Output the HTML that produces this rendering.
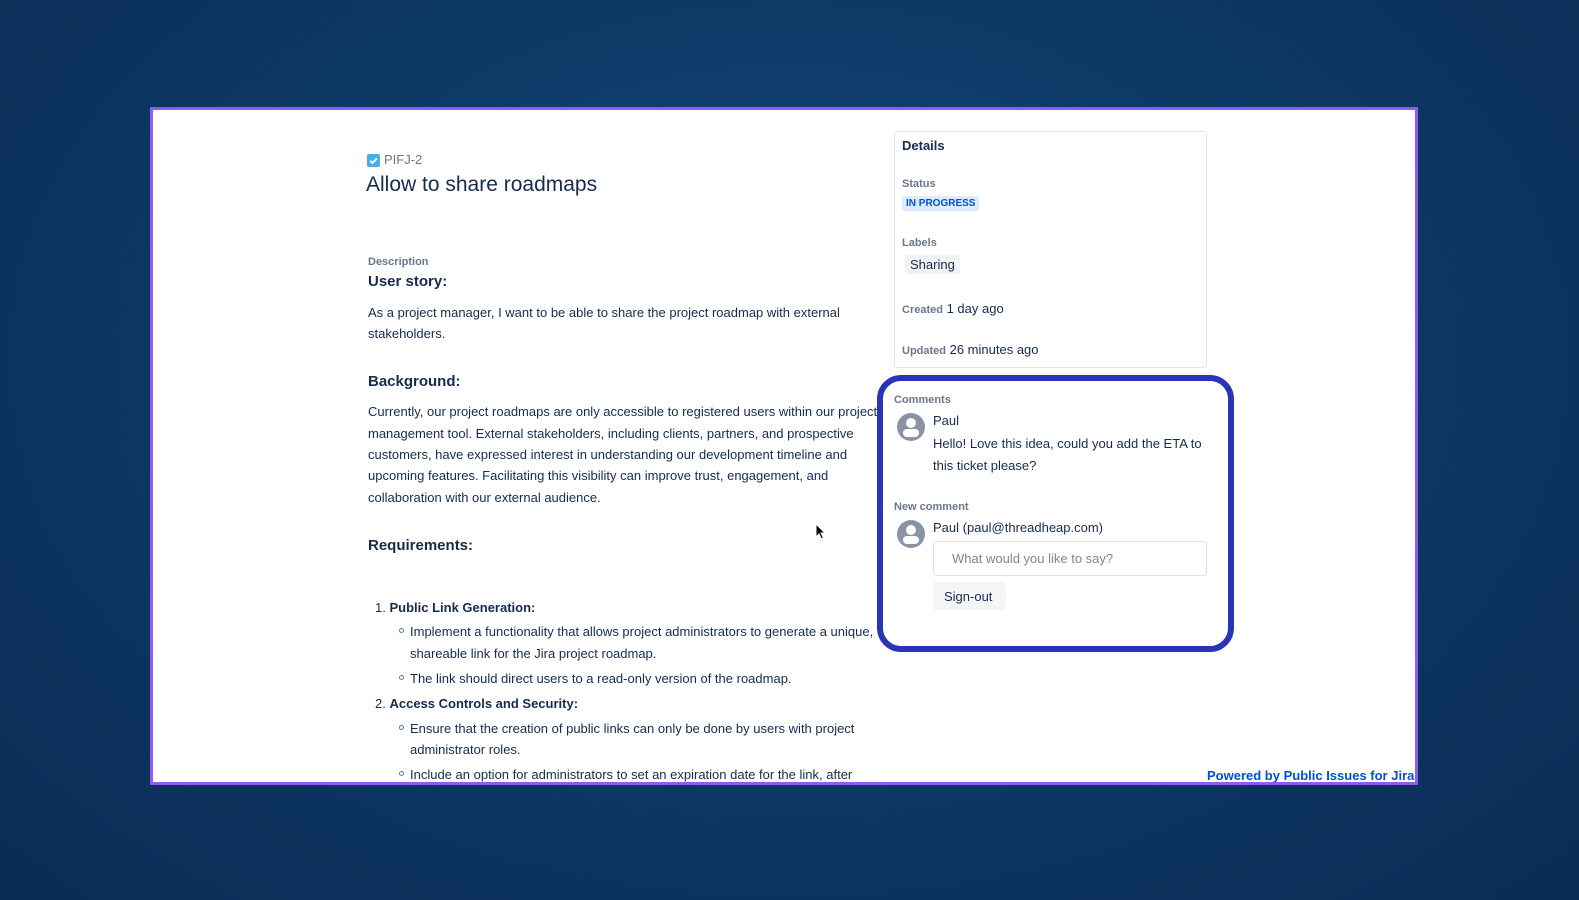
<!DOCTYPE html>
<html><head><meta charset="utf-8"><style>
*{margin:0;padding:0;box-sizing:border-box}
body{width:1579px;height:900px;overflow:hidden;background:radial-gradient(ellipse at 50% 40%,#134678 0%,#0d3764 55%,#0a2c55 100%);font-family:"Liberation Sans",sans-serif;color:#172b4d;position:relative}
.frame{position:absolute;left:150px;top:107px;width:1268px;height:678px;background:#fff;border:3px solid #8e5cf0;overflow:hidden}
.a{position:absolute;white-space:nowrap}
.t{font-size:13px}
.lbl{font-size:11px;font-weight:bold;color:#6b778c}
.h{font-size:15px;font-weight:bold}
.b{font-size:13px;font-weight:bold}
.bul{position:absolute;width:5px;height:5px;border:1px solid #6b778c;border-radius:50%}
.av{position:absolute;width:28px;height:28px;border-radius:50%;background:#8993a4;overflow:hidden}
.av:before{content:"";position:absolute;left:9px;top:5px;width:10px;height:10px;border-radius:50%;background:#fff}
.av:after{content:"";position:absolute;left:6px;top:16px;width:16px;height:8px;border-radius:4px;background:#fff}
</style></head><body>
<div class="frame">
<!-- coordinates relative to frame: subtract 153,110 -->
<div class="a" style="left:214px;top:44px;width:13px;height:13px;background:#4bade8;border-radius:2px"><svg width="13" height="13" viewBox="0 0 13 13"><path d="M3.2 6.7l2.3 2.3 4.3-4.6" stroke="#fff" stroke-width="1.8" fill="none"/></svg></div>
<div class="a" style="left:231px;top:42px;font-size:13px;color:#6b778c">PIFJ-2</div>
<div class="a" style="left:213px;top:63px;font-size:21px;color:#172b4d">Allow to share roadmaps</div>
<div class="a lbl" style="left:215px;top:146px">Description</div>
<div class="a h" style="left:215px;top:163px">User story:</div>
<div class="a t" style="left:215px;top:195px">As a project manager, I want to be able to share the project roadmap with external</div>
<div class="a t" style="left:215px;top:216px">stakeholders.</div>
<div class="a h" style="left:215px;top:263px">Background:</div>
<div class="a t" style="left:215px;top:294px">Currently, our project roadmaps are only accessible to registered users within our project</div>
<div class="a t" style="left:215px;top:316px">management tool. External stakeholders, including clients, partners, and prospective</div>
<div class="a t" style="left:215px;top:337px">customers, have expressed interest in understanding our development timeline and</div>
<div class="a t" style="left:215px;top:358px">upcoming features. Facilitating this visibility can improve trust, engagement, and</div>
<div class="a t" style="left:215px;top:380px">collaboration with our external audience.</div>
<div class="a h" style="left:215px;top:427px">Requirements:</div>
<div class="a t" style="left:222px;top:490px">1. <b>Public Link Generation:</b></div>
<div class="bul" style="left:246px;top:518px"></div>
<div class="a t" style="left:257px;top:514px">Implement a functionality that allows project administrators to generate a unique,</div>
<div class="a t" style="left:257px;top:536px">shareable link for the Jira project roadmap.</div>
<div class="bul" style="left:246px;top:565px"></div>
<div class="a t" style="left:257px;top:561px">The link should direct users to a read-only version of the roadmap.</div>
<div class="a t" style="left:222px;top:586px">2. <b>Access Controls and Security:</b></div>
<div class="bul" style="left:246px;top:615px"></div>
<div class="a t" style="left:257px;top:611px">Ensure that the creation of public links can only be done by users with project</div>
<div class="a t" style="left:257px;top:632px">administrator roles.</div>
<div class="bul" style="left:246px;top:661px"></div>
<div class="a t" style="left:257px;top:657px">Include an option for administrators to set an expiration date for the link, after</div>

<!-- details -->
<div class="a" style="left:741px;top:21px;width:313px;height:237px;border:1px solid #e4e6ea;border-radius:3px"></div>
<div class="a b" style="left:749px;top:28px">Details</div>
<div class="a lbl" style="left:749px;top:68px">Status</div>
<div class="a" style="left:749px;top:86px;background:#deebff;color:#0052cc;font-size:10px;font-weight:bold;padding:2px 4px;border-radius:3px">IN PROGRESS</div>
<div class="a lbl" style="left:749px;top:127px">Labels</div>
<div class="a t" style="left:752px;top:145px;background:#f1f2f4;padding:2px 5px;border-radius:3px">Sharing</div>
<div class="a" style="left:749px;top:191px;font-size:13px"><span class="lbl">Created</span> 1 day ago</div>
<div class="a" style="left:749px;top:232px;font-size:13px"><span class="lbl">Updated</span> 26 minutes ago</div>

<!-- comments -->
<div class="a" style="left:724px;top:265px;width:357px;height:277px;border:6px solid #2a35b5;border-radius:24px"></div>
<div class="a lbl" style="left:741px;top:284px">Comments</div>
<div class="av" style="left:744px;top:303px"></div>
<div class="a t" style="left:780px;top:303px">Paul</div>
<div class="a t" style="left:780px;top:326px">Hello! Love this idea, could you add the ETA to</div>
<div class="a t" style="left:780px;top:348px">this ticket please?</div>
<div class="a lbl" style="left:741px;top:391px">New comment</div>
<div class="av" style="left:744px;top:410px"></div>
<div class="a t" style="left:780px;top:410px">Paul (paul@threadheap.com)</div>
<div class="a t" style="left:780px;top:431px;width:274px;height:35px;border:1px solid #dfe1e6;border-radius:3px;padding:9px 18px;color:#7a869a">What would you like to say?</div>
<div class="a t" style="left:780px;top:472px;width:73px;height:28px;background:#f4f5f7;border-radius:3px;padding:7px 11px">Sign-out</div>

<div class="a" style="left:1054px;top:658px;font-size:13px;font-weight:bold;color:#0052cc">Powered by Public Issues for Jira</div>
<svg class="a" style="left:662px;top:413px" width="12" height="18" viewBox="0 0 12 18"><path d="M1 1v13l3-3 2.5 5 2-1-2.5-5h4z" fill="#000" stroke="#fff" stroke-width="1"/></svg>
</div>
</body></html>
